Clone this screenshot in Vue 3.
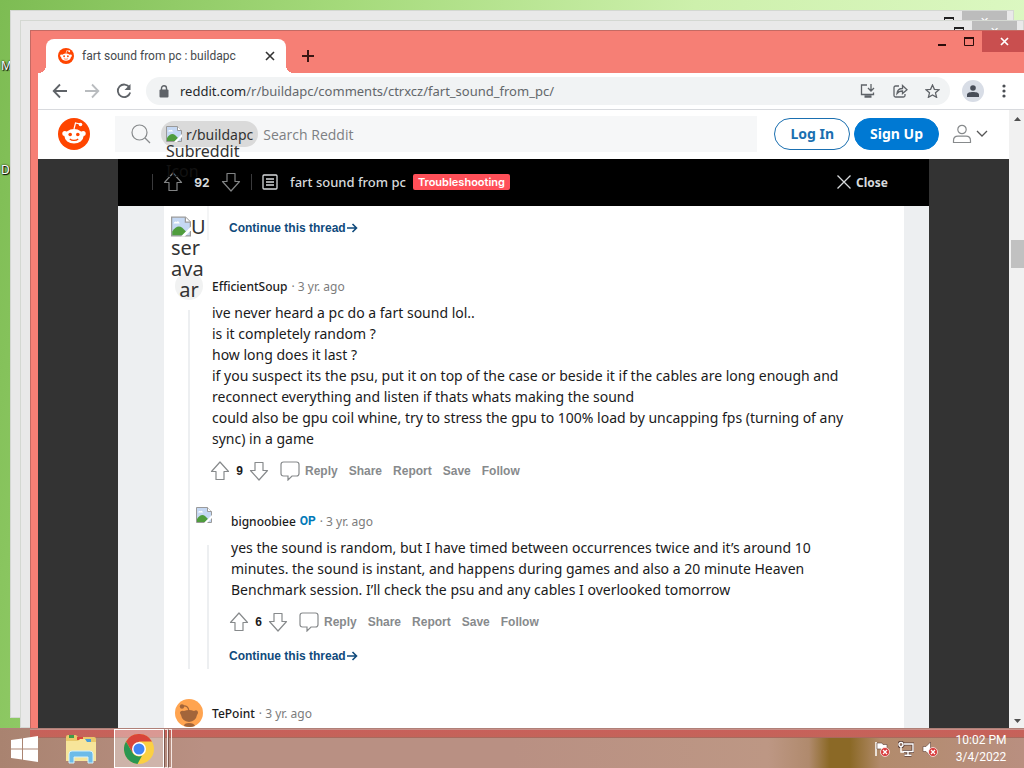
<template>
  <div class="desktop">
    <span class="desktop-label label-first">My</span>
    <span class="desktop-label label-second">De</span>

    <div class="back-window back-one">
      <span class="back-max"></span>
      <span class="back-close">✕</span>
    </div>
    <div class="back-window back-two">
      <span class="back-max"></span>
      <span class="back-close">✕</span>
    </div>

    <section class="browser">
      <div class="titlebar">
        <div class="tab">
          <svg class="tab-logo" viewBox="0 0 32 32">
            <use href="#snoo" />
          </svg>
          <span class="tab-title">fart sound from pc : buildapc</span>
          <button class="icon-button" aria-label="Close tab">
            <svg width="10" height="10" viewBox="0 0 10 10">
              <path d="M1 1l8 8M9 1l-8 8" stroke="#333" stroke-width="1.6" />
            </svg>
          </button>
        </div>
        <button class="icon-button new-tab" aria-label="New tab">
          <svg width="14" height="14" viewBox="0 0 14 14">
            <path d="M7 1v12M1 7h12" stroke="#3a1613" stroke-width="2" />
          </svg>
        </button>
        <div class="window-controls">
          <button aria-label="Minimize">
            <svg width="10" height="10" viewBox="0 0 10 10">
              <path d="M1 8h8" stroke="#2b0d0b" stroke-width="2" />
            </svg>
          </button>
          <button aria-label="Maximize">
            <svg width="10" height="9" viewBox="0 0 10 9">
              <path d="M.5 1v7.5h9V1" fill="none" stroke="#2b0d0b" />
              <path d="M0 1h10" stroke="#2b0d0b" stroke-width="2" />
            </svg>
          </button>
          <button class="window-close" aria-label="Close">
            <svg width="9" height="9" viewBox="0 0 9 9">
              <path d="M1 1l7 7M8 1l-7 7" stroke="#fff" stroke-width="1.7" />
            </svg>
          </button>
        </div>
      </div>

      <div class="toolbar">
        <button class="icon-button" aria-label="Back">
          <svg width="16" height="16" viewBox="0 0 16 16" class="line dark">
            <path d="M15 8H2M8 1.500L1.700 8L8 14.500" />
          </svg>
        </button>
        <button class="icon-button" aria-label="Forward">
          <svg width="16" height="16" viewBox="0 0 16 16" class="line pale">
            <path d="M1 8h13M8 1.500L14.300 8L8 14.500" />
          </svg>
        </button>
        <button class="icon-button" aria-label="Reload">
          <svg width="16" height="16" viewBox="0 0 16 16" class="line dark">
            <path d="M13.500 4.500A6.300 6.300 0 1 0 14.200 9.500" />
            <path d="M14.500 1v6h-6z" fill="#5f6368" stroke="none" />
          </svg>
        </button>
        <div class="address">
          <svg width="10" height="13" viewBox="0 0 10 13">
            <rect x="0.500" y="4.500" width="9" height="8" rx="1" fill="#5f6368" />
            <path d="M2.500 5V3.300a2.500 2.500 0 0 1 5 0V5" fill="none" stroke="#5f6368" stroke-width="1.400" />
          </svg>
          <a class="url" href="#"><b>reddit.com</b>/r/buildapc/comments/ctrxcz/fart_sound_from_pc/</a>
          <button class="icon-button" aria-label="Install">
            <svg width="16" height="14" viewBox="0 0 16 14" class="line dark thin">
              <path d="M7 1H1.500v9.500h12V8.500M11 0v6.500M8 4l3 3l3-3" />
              <path d="M4.500 12.500h7" stroke-width="2.500" />
            </svg>
          </button>
          <button class="icon-button" aria-label="Share">
            <svg width="15" height="14" viewBox="0 0 15 14" class="line dark thin">
              <path d="M6 2H2.500a1.500 1.500 0 0 0-1.500 1.500v8A1.500 1.500 0 0 0 2.500 13h8a1.500 1.500 0 0 0 1.500-1.500V10" />
              <path d="M4 9.500c.3-3.500 2.500-5 5.500-5V1.500L14 5.700L9.500 9.500V7C7 7 5.300 7.700 4 9.500z" />
            </svg>
          </button>
          <button class="icon-button" aria-label="Bookmark">
            <svg width="15" height="14" viewBox="0 0 15 14" class="line dark thin">
              <path d="M7.500 1l1.900 4.300l4.600.4l-3.500 3.100l1.100 4.500l-4.100-2.400l-4.100 2.400l1.100-4.500L1 5.700l4.600-.4z" />
            </svg>
          </button>
        </div>
        <button class="profile" aria-label="Profile">
          <svg width="12" height="12" viewBox="0 0 12 12" fill="#474d58">
            <circle cx="6" cy="3" r="2.800" />
            <path d="M0 12V9.500C0 7.800 3 7 6 7s6 .8 6 2.500V12z" />
          </svg>
        </button>
        <button class="icon-button menu" aria-label="Menu">
          <svg width="4" height="14" viewBox="0 0 4 14" fill="#4b4f54">
            <circle cx="2" cy="2" r="1.600" />
            <circle cx="2" cy="7" r="1.600" />
            <circle cx="2" cy="12" r="1.600" />
          </svg>
        </button>
      </div>

      <div class="viewport">
        <main class="page">
          <header class="site-header">
            <svg class="site-logo" viewBox="0 0 32 32">
              <g id="snoo">
                <circle cx="16" cy="16" r="16" fill="#ff4500" />
                <path d="M16 11l1.500-6l4.500 1" fill="none" stroke="#fff" stroke-width="1.200" />
                <circle cx="22.500" cy="6.500" r="1.800" fill="#fff" />
                <circle cx="6.800" cy="15.500" r="2.500" fill="#fff" />
                <circle cx="25.200" cy="15.500" r="2.500" fill="#fff" />
                <ellipse cx="16" cy="18.300" rx="9.500" ry="7.200" fill="#fff" />
                <circle cx="12.200" cy="16.500" r="1.800" fill="#ff4500" />
                <circle cx="19.800" cy="16.500" r="1.800" fill="#ff4500" />
                <path d="M11.800 21c2 1.900 6.400 1.900 8.400 0" fill="none" stroke="#ff4500" stroke-width="1.200" />
              </g>
            </svg>
            <div class="search">
              <svg width="20" height="20" viewBox="0 0 20 20" fill="none" stroke="#878a8c" stroke-width="1.200">
                <circle cx="8.500" cy="8.500" r="7.500" />
                <path d="M14 14l5 5" />
              </svg>
              <span class="chip">
                <svg width="16" height="16" viewBox="0 0 16 16"><use href="#broken" /></svg>
                r/buildapc
                <span class="chip-alt">Subreddit<br /><i>Icon</i></span>
              </span>
              <input type="search" placeholder="Search Reddit" aria-label="Search Reddit" />
            </div>
            <button class="pill outline">Log In</button>
            <button class="pill solid">Sign Up</button>
            <button class="icon-button user-menu" aria-label="User menu">
              <svg width="20" height="20" viewBox="0 0 20 20" fill="none" stroke="#878a8c" stroke-width="1.200">
                <circle cx="10" cy="5.500" r="4.200" />
                <path d="M1.500 18.500v-1.800c0-3 2-4.500 4.500-4.500h8c2.500 0 4.500 1.500 4.500 4.500v1.800z" />
              </svg>
              <svg width="12" height="8" viewBox="0 0 12 8" fill="none" stroke="#555" stroke-width="1.300">
                <path d="M1 1l5 5l5-5" />
              </svg>
            </button>
          </header>

          <article class="post">
            <div class="post-bar">
              <div class="post-votes">
                <button class="icon-button" aria-label="Upvote">
                  <svg class="arrow" viewBox="0 0 20 20"><use href="#arrow" /></svg>
                </button>
                <span>92</span>
                <button class="icon-button" aria-label="Downvote">
                  <svg class="arrow down" viewBox="0 0 20 20"><use href="#arrow" /></svg>
                </button>
              </div>
              <svg width="16" height="16" viewBox="0 0 16 16" fill="none" stroke="#d7dadc" stroke-width="1.300">
                <rect x="1" y="1" width="14" height="14" rx="1" />
                <path d="M4 5h8M4 8h8M4 11h8" />
              </svg>
              <h1>fart sound from pc</h1>
              <span class="flair">Troubleshooting</span>
              <button class="close-post">
                <svg width="14" height="14" viewBox="0 0 14 14" stroke="#d7dadc" stroke-width="1.300">
                  <path d="M.5.5l13 13M13.500.5l-13 13" />
                </svg>
                Close
              </button>
            </div>

            <div class="sheet">
              <div class="comments">
                <div class="thread-tail">
                  <ThreadLink />
                </div>
                <Comment v-for="comment in comments" :key="comment.author" :comment="comment" />
              </div>
            </div>
          </article>
        </main>
        <div class="scrollbar">
          <svg width="7" height="4" viewBox="0 0 7 4"><path d="M0 4l3.500-4L7 4z" fill="#505050" /></svg>
          <span class="thumb"></span>
          <svg width="7" height="4" viewBox="0 0 7 4"><path d="M0 0l3.500 4L7 0z" fill="#505050" /></svg>
        </div>
      </div>
    </section>

    <footer class="taskbar">
      <button class="task start" aria-label="Start">
        <svg width="27" height="26" viewBox="0 0 27 26" fill="#fff">
          <path d="M0 4L11 2.500V12.400H0zM12 2.300L27 0v12.400H12zM0 13.500h11v10L0 22zM12 13.500h15V26l-15-2.300z" />
        </svg>
      </button>
      <button class="task files" aria-label="File Explorer">
        <svg width="32" height="30" viewBox="0 0 32 30">
          <path d="M1 3q0-2 2-2h8l2 2h16q2 0 2 2v22H1z" fill="#e9c96b" />
          <path d="M4 1h5v3H4z" fill="#3f9a4a" />
          <path d="M12 3h6v3h-6z" fill="#d9483b" />
          <path d="M20 5h6v3h-6z" fill="#4b9fd8" />
          <path d="M1 7h12l2-2h5l2 3h9v19H1z" fill="#f7e59a" />
          <path d="M4 29v-9q0-3 3-3h18q3 0 3 3v9h-5v-6H9v6z" fill="#6dbbe8" stroke="#d5f1fb" />
        </svg>
      </button>
      <button class="task chrome" aria-label="Chrome">
        <svg width="30" height="30" viewBox="0 0 30 30">
          <circle cx="15" cy="15" r="15" fill="#fbd043" />
          <path d="M2 7.500A15 15 0 0 1 28 7.500H15L8.500 18.700z" fill="#d9453a" />
          <path d="M2 7.500L8.500 18.700A7.500 7.500 0 0 0 18 21.800L13.500 30A15 15 0 0 1 2 7.500z" fill="#2a9652" />
          <circle cx="15" cy="15" r="7" fill="#fff" />
          <circle cx="15" cy="15" r="5.500" fill="#4285f4" />
        </svg>
      </button>
      <span class="stack"></span>
      <span class="stack"></span>
      <div class="tray">
        <svg width="16" height="16" viewBox="0 0 16 16">
          <path d="M2 1v14" stroke="#fff" stroke-width="1.500" />
          <path d="M3 2h5l1 1.500h4V9H8L7 8H3z" fill="#fff" stroke="#5d4038" stroke-width=".6" />
          <use href="#alert" />
        </svg>
        <svg width="16" height="16" viewBox="0 0 16 16" fill="none">
          <g stroke="#5d4038" stroke-width="3">
            <path d="M6 3h9v7.500H5M10 11v3M6.500 14.300h7" />
            <circle cx="3" cy="3.500" r="2.200" />
          </g>
          <g stroke="#fff" stroke-width="1.400">
            <path d="M6 3h9v7.500H5M10 11v3M6.500 14.300h7" />
            <circle cx="3" cy="3.500" r="2" />
            <path d="M3 6v5h3" />
          </g>
        </svg>
        <svg width="16" height="16" viewBox="0 0 16 16">
          <path d="M1 5.500h3L8.500 1v14L4 10.500H1z" fill="#fff" stroke="#5d4038" stroke-width=".6" />
          <g id="alert">
            <circle cx="11" cy="11" r="4.500" fill="#d83a3a" stroke="#fff" stroke-width=".7" />
            <path d="M9 9l4 4M13 9l-4 4" stroke="#fff" stroke-width="1.300" />
          </g>
        </svg>
      </div>
      <div class="clock">
        <span>10:02 PM</span>
        <span>3/4/2022</span>
      </div>
    </footer>

    <!-- shared symbols -->
    <svg class="symbols" width="0" height="0">
      <g id="arrow">
        <path d="M10 1l8.500 9.500h-4.500v8h-8v-8H1.500z" fill="none" stroke="currentColor" stroke-width="1.200" stroke-linejoin="round" />
      </g>
      <g id="broken">
        <path d="M.5.5h11l4 4v11H.5z" fill="#c5d8f3" stroke="#9a9a9a" />
        <path d="M2 5.500q1-2 2.500-1.200Q6 3 7 5.500z" fill="#fff" />
        <path d="M1 15v-3q4-6 8-3l3 3l-3 3z" fill="#4f9d3d" />
        <path d="M8 16l8-8v3l-5 5z" fill="#fff" />
        <path d="M11.500.5v4h4" fill="#fff" stroke="#9a9a9a" />
      </g>
    </svg>
  </div>
</template>

<script setup>
import { h } from "vue";

const actions = ["Share", "Report", "Save", "Follow"];

const comments = [
  {
    author: "EfficientSoup",
    avatar: "alt",
    votes: 9,
    lines: [
      "ive never heard a pc do a fart sound lol..",
      "is it completely random ?",
      "how long does it last ?",
      "if you suspect its the psu, put it on top of the case or beside it if the cables are long enough and reconnect everything and listen if thats whats making the sound",
      "could also be gpu coil whine, try to stress the gpu to 100% load by uncapping fps (turning of any sync) in a game",
    ],
    replies: [
      {
        author: "bignoobiee",
        op: true,
        avatar: "broken",
        votes: 6,
        more: true,
        lines: [
          "yes the sound is random, but I have timed between occurrences twice and it’s around 10 minutes. the sound is instant, and happens during games and also a 20 minute Heaven Benchmark session. I’ll check the psu and any cables I overlooked tomorrow",
        ],
      },
    ],
  },
  { author: "TePoint", avatar: "snoo" },
];

// small render helpers
const useIcon = (id, className, size = 20) =>
  h("svg", { class: className, viewBox: `0 0 ${size} ${size}` }, [
    h("use", { href: `#${id}` }),
  ]);

const ThreadLink = () =>
  h("a", { class: "thread-link", href: "#" }, [
    "Continue this thread",
    h("svg", { width: 11, height: 10, viewBox: "0 0 11 10" }, [
      h("path", {
        d: "M0 5h9.500M5.500 1l4 4l-4 4",
        fill: "none",
        stroke: "currentColor",
        "stroke-width": 1.6,
      }),
    ]),
  ]);

const Avatar = ({ kind }) => {
  if (kind === "alt") {
    return h("div", { class: "avatar avatar-alt" }, [
      h("div", { class: "alt-text" }, [
        h("span", [useIcon("broken", "alt-icon", 16), "U"]),
        h("span", "ser"),
        h("span", "ava"),
        h("span", { class: "alt-last" }, "ar"),
      ]),
    ]);
  }
  if (kind === "broken") {
    return h("div", { class: "avatar" }, [useIcon("broken", "broken", 16)]);
  }
  return h("div", { class: "avatar avatar-snoo" }, [
    h("svg", { viewBox: "0 0 28 28" }, [
      h("circle", { cx: 14, cy: 14, r: 14, fill: "#ffa450" }),
      h("path", {
        d: "M14 12q-1-6-6-5",
        fill: "none",
        stroke: "#a3653a",
        "stroke-width": 1.2,
      }),
      h("circle", { cx: 7, cy: 7.5, r: 2.2, fill: "#a3653a" }),
      h("path", {
        d: "M5 13q2-2 4-1q5-2 10 0q3-2 4 1q0 2-1 3q-1 6-8 7q-7-1-8-7q-1-1-1-3z",
        fill: "#a3653a",
      }),
      h("path", { d: "M9 27q0-3 5-3t6 3q-5 2-11 0z", fill: "#a3653a" }),
    ]),
  ]);
};
Avatar.props = ["kind"];

const Comment = ({ comment }) =>
  h("div", { class: "comment" }, [
    h("div", { class: "comment-head" }, [
      h(Avatar, { kind: comment.avatar }),
      h("a", { class: "author", href: "#" }, comment.author),
      comment.op ? h("span", { class: "op" }, "OP") : null,
      h("span", { class: "age" }, "· 3 yr. ago"),
    ]),
    comment.lines
      ? h("div", { class: "comment-thread" }, [
          h("div", { class: "comment-main" }, [
            comment.lines.map((line) => h("p", line)),
            h("div", { class: "actions" }, [
              h("button", { "aria-label": "Upvote" }, [useIcon("arrow", "arrow")]),
              h("span", { class: "votes" }, comment.votes),
              h("button", { "aria-label": "Downvote" }, [
                useIcon("arrow", "arrow down"),
              ]),
              h("button", { class: "reply" }, [
                h("svg", { viewBox: "0 0 20 20" }, [
                  h("path", {
                    d: "M3.500 1h13Q19 1 19 3.500v9q0 2.500-2.500 2.500H12l-4 4v-4H3.500Q1 15 1 12.500v-9Q1 1 3.500 1z",
                    fill: "none",
                    stroke: "currentColor",
                    "stroke-width": 1.2,
                  }),
                ]),
                "Reply",
              ]),
              actions.map((action) => h("button", action)),
            ]),
            comment.more ? h(ThreadLink) : null,
          ]),
          (comment.replies || []).map((reply) => h(Comment, { comment: reply })),
        ])
      : null,
  ]);
Comment.props = ["comment"];
</script>

<style>
body {
  margin: 0;
  overflow: hidden;
}

/* comments come from render functions */
.comment-head {
  display: flex;
  align-items: center;
  height: 28px;
  font-size: 12px;
}

.comment + .comment {
  margin-top: 30px;
}

.comment-thread > .comment {
  margin-top: 22px;
  margin-left: 19px;
}

.avatar {
  width: 28px;
  height: 28px;
  margin-right: 9px;
}

.avatar svg {
  display: block;
}

.avatar .broken {
  width: 16px;
  height: 16px;
  margin-left: 2px;
}

.avatar-alt {
  position: relative;
  border-radius: 14px;
  background: #f1f2f2;
}

.alt-text {
  position: absolute;
  left: -4px;
  bottom: 0;
  width: 36px;
  display: flex;
  flex-direction: column;
  color: #333;
  font-size: 20px;
  line-height: 21px;
}

.alt-text span {
  display: flex;
}

.alt-text .alt-last {
  justify-content: center;
}

.alt-text .alt-icon {
  width: 20px;
  height: 21px;
}

.author {
  color: #1c1c1c;
  font-weight: 500;
  text-decoration: none;
}

.op {
  margin-left: 4px;
  color: #0079b8;
  font-family: "Roboto", sans-serif;
  font-size: 12px;
  font-weight: 700;
}

.age {
  margin-left: 4px;
  color: #7c7c7c;
}

.comment-thread {
  position: relative;
  margin-top: 2px;
}

.comment-thread::before {
  content: "";
  position: absolute;
  top: 8px;
  bottom: 0;
  left: 13px;
  width: 2px;
  background: #edeff1;
}

.comment-main {
  padding-left: 37px;
}

.comment-main p {
  margin: 0;
  max-width: 640px;
  color: #1a1a1b;
  font-size: 14px;
  line-height: 21px;
}

.actions {
  display: flex;
  align-items: center;
  height: 28px;
  margin-top: 8px;
  color: #878a8c;
}

.actions button {
  display: flex;
  align-items: center;
  margin-right: 11px;
  padding: 0;
  border: 0;
  background: none;
  color: inherit;
  font-family: "Liberation Sans", sans-serif;
  font-size: 12px;
  font-weight: 700;
}

.actions button:nth-child(1) {
  margin-right: 0;
  margin-left: -2px;
}

.actions .votes {
  width: 19px;
  color: #1a1a1b;
  font-family: "Liberation Sans", sans-serif;
  font-size: 12px;
  font-weight: 700;
  text-align: center;
}

.actions svg,
.arrow {
  width: 20px;
  height: 20px;
}

.actions .reply svg {
  margin-right: 5px;
}

.arrow.down {
  transform: rotate(180deg);
}

.thread-link {
  display: flex;
  align-items: center;
  gap: 1px;
  height: 26px;
  margin: 7px 0 0 -2px;
  color: #0f4a7c;
  font-family: "Liberation Sans", sans-serif;
  font-size: 12px;
  font-weight: 700;
  text-decoration: none;
}
</style>

<style scoped>
.desktop {
  position: relative;
  height: 100vh;
  overflow: hidden;
  background: linear-gradient(100deg, #7dbc53 0%, #a5da7b 30%, #cdf0ac 60%, #dcf8c2 90%, #b9ec8c 100%);
  font-family: "Noto Sans", sans-serif;
}

button {
  font-family: inherit;
  cursor: pointer;
}

.symbols {
  position: absolute;
}

.desktop-label {
  position: absolute;
  left: 1px;
  color: #fff;
  font-size: 12px;
  line-height: 16px;
  text-shadow: 0 0 2px #000, 1px 1px 1px #000;
}

.label-first {
  top: 58px;
}

.label-second {
  top: 162px;
}

.back-window {
  position: absolute;
  display: flex;
  justify-content: flex-end;
  box-sizing: border-box;
  border: 1px solid #d4d8d2;
  background: #e9e9e9;
}

.back-one {
  top: 10px;
  right: 10px;
  bottom: 50px;
  left: 10px;
}

.back-two {
  top: 20px;
  right: 0;
  bottom: 40px;
  left: 20px;
}

.back-max {
  width: 8px;
  height: 6px;
  margin: 6px 8px 0 0;
  border: 1px solid #222;
  border-top-width: 2px;
}

.back-close {
  width: 45px;
  height: 20px;
  margin-right: 6px;
  background: #bcbcbc;
  color: #fff;
  font-size: 11px;
  line-height: 20px;
  text-align: center;
}

.browser {
  position: absolute;
  top: 30px;
  right: -10px;
  bottom: 30px;
  left: 30px;
  display: flex;
  flex-direction: column;
  box-sizing: border-box;
  padding: 0 7px 8px;
  border: 1px solid #c46a63;
  border-bottom: 0;
  background: #f67f75;
}

.icon-button {
  display: flex;
  align-items: center;
  padding: 0;
  border: 0;
  background: none;
}

.titlebar {
  display: flex;
  height: 42px;
  padding-left: 8px;
}

.tab {
  position: relative;
  display: flex;
  align-items: center;
  box-sizing: border-box;
  width: 240px;
  height: 34px;
  margin-top: 8px;
  padding: 0 11px 0 12px;
  border-radius: 8px 8px 0 0;
  background: #fff;
}

.tab::before,
.tab::after {
  content: "";
  position: absolute;
  bottom: 0;
  width: 8px;
  height: 8px;
}

.tab::before {
  left: -8px;
  background: radial-gradient(circle at 0 0, transparent 8px, #fff 8px);
}

.tab::after {
  right: -8px;
  background: radial-gradient(circle at 100% 0, transparent 8px, #fff 8px);
}

.tab-logo {
  width: 16px;
  height: 16px;
  margin-right: 8px;
}

.tab-title {
  flex: 1;
  color: #45494d;
  font-family: "Roboto", sans-serif;
  font-size: 12px;
}

.new-tab {
  margin: 8px 0 0 15px;
}

.window-controls {
  display: flex;
  align-items: flex-start;
  margin-right: -1px;
  margin-left: auto;
}

.window-controls button {
  display: flex;
  justify-content: center;
  align-items: center;
  width: 27px;
  height: 21px;
  padding: 0;
  border: 0;
  background: none;
}

.window-controls .window-close {
  width: 45px;
  background: #c94f4f;
}

.toolbar {
  display: flex;
  align-items: center;
  gap: 16px;
  box-sizing: border-box;
  height: 37px;
  padding: 0 17px 0 14px;
  border-bottom: 1px solid #d8dade;
  background: #fff;
}

.line {
  fill: none;
  stroke-width: 1.8;
}

.line.thin {
  stroke-width: 1.3;
}

.line.dark {
  stroke: #5f6368;
}

.line.pale {
  stroke: #b9bcbf;
}

.address {
  flex: 1;
  display: flex;
  align-items: center;
  gap: 17px;
  height: 28px;
  margin-left: -2px;
  padding: 0 10px 0 13px;
  border-radius: 14px;
  background: #f1f3f4;
}

.url {
  flex: 1;
  margin-left: -6px;
  color: #63676b;
  font-size: 13px;
  text-decoration: none;
}

.url b {
  color: #27292c;
  font-weight: 400;
}

.profile {
  display: flex;
  justify-content: center;
  align-items: center;
  width: 22px;
  height: 22px;
  margin-left: -4px;
  padding: 0;
  border: 0;
  border-radius: 11px;
  background: #d8dde6;
}

.menu {
  margin: 0 3px 0 2px;
}

.viewport {
  flex: 1;
  display: flex;
  min-height: 0;
}

.page {
  flex: 1;
  min-width: 0;
  overflow: hidden;
  background: #333;
}

.site-header {
  display: flex;
  align-items: center;
  box-sizing: border-box;
  height: 49px;
  padding: 0 21px 1px 20px;
  background: #fff;
}

.site-logo {
  width: 32px;
  height: 32px;
}

.search {
  flex: 1;
  display: flex;
  align-items: center;
  height: 36px;
  margin: 0 17px 0 25px;
  padding-left: 16px;
  background: #f6f7f8;
}

.chip {
  position: relative;
  display: flex;
  align-items: center;
  gap: 4px;
  height: 26px;
  margin-left: 10px;
  padding: 0 5px;
  border-radius: 13px;
  background: #dadada;
  color: #333;
  font-size: 14px;
}

.chip-alt {
  position: absolute;
  top: 20px;
  left: 5px;
  font-size: 16px;
  line-height: 20px;
}

.chip-alt i {
  color: #121212;
  font-style: normal;
}

.search input {
  flex: 1;
  min-width: 0;
  padding: 0 0 0 5px;
  border: 0;
  outline: 0;
  background: none;
  font-family: "Open Sans", sans-serif;
  font-size: 14px;
}

.search input::placeholder {
  color: #7d8083;
}

.pill {
  height: 32px;
  margin-right: 4px;
  padding: 0 15px 1px;
  border: 1px solid #1a6fb0;
  border-radius: 16px;
  font-size: 14px;
  font-weight: 700;
}

.pill.outline {
  background: #fff;
  color: #1a6fb0;
}

.pill.solid {
  margin-right: 13px;
  border-color: #0079d3;
  background: #0079d3;
  color: #fff;
}

.user-menu {
  gap: 4px;
}

.post {
  margin: 0 80px;
  background: #edeff1;
}

.post-bar {
  display: flex;
  align-items: center;
  box-sizing: border-box;
  height: 47px;
  padding: 0 41px 1px 34px;
  background: #000;
  color: #d7dadc;
}

.post-votes {
  display: flex;
  align-items: center;
  height: 16px;
  margin-right: 10px;
  padding: 0 10px;
  border-right: 1px solid #3a3a3c;
  border-left: 1px solid #3a3a3c;
  font-family: "Inter", sans-serif;
  font-size: 12px;
  font-weight: 700;
}

.post-votes span {
  width: 38px;
  text-align: center;
}

.post-votes button {
  color: #818384;
}

.post-bar h1 {
  margin: 0 7px 0 12px;
  font-size: 13px;
  font-weight: 500;
}

.flair {
  padding: 0 5px;
  border-radius: 2px;
  background: #ff4f58;
  color: #fff;
  font-family: "Inter", sans-serif;
  font-size: 11px;
  font-weight: 600;
  line-height: 16px;
}

.close-post {
  display: flex;
  align-items: center;
  gap: 5px;
  margin-left: auto;
  padding: 0;
  border: 0;
  background: none;
  color: #d7dadc;
  font-size: 12px;
  font-weight: 700;
}

.sheet {
  padding: 0 25px 0 46px;
}

.comments {
  min-height: 560px;
  padding: 0 10px 0 11px;
  background: #fff;
}

.thread-tail {
  position: relative;
  height: 66px;
  padding-left: 56px;
}

.thread-tail::before {
  content: "";
  position: absolute;
  top: 0;
  left: 32px;
  width: 2px;
  height: 34px;
  background: #f4f5f6;
}

.thread-tail :deep(.thread-link) {
  height: 44px;
  margin-top: 0;
}

.scrollbar {
  display: flex;
  flex-direction: column;
  align-items: center;
  box-sizing: border-box;
  width: 17px;
  padding: 7px 0;
  background: #f1f1f1;
}

.scrollbar .thumb {
  width: 13px;
  height: 28px;
  margin: 119px 0 auto;
  background: #c1c1c1;
}

.taskbar {
  position: absolute;
  right: 0;
  bottom: 0;
  left: 0;
  display: flex;
  box-sizing: border-box;
  height: 40px;
  border-top: 1px solid #b08078;
  background:
    linear-gradient(180deg, #c98f88 1px, #c8605a 1px, #c46459 8px, #a8695d 8px) 30px 0 / 100% 9px no-repeat,
    linear-gradient(90deg, #a98370 0%, #b99083 20%, #b99083 50%, #bd9784 75%, #b08a6d 79%, #8b6926 81%, #8b6926 83%, #b28b6c 86%, #b98f80 100%);
}

.task {
  display: flex;
  justify-content: center;
  align-items: center;
  padding: 0;
  border: 0;
  background: none;
}

.start {
  width: 48px;
}

.files {
  width: 66px;
}

.chrome {
  box-sizing: border-box;
  width: 50px;
  border: 1px solid #fff;
  background: rgba(255, 255, 255, 0.35);
}

.stack {
  box-sizing: border-box;
  width: 4px;
  border: 1px solid #f5e8e4;
  border-left: 1px solid #7d574d;
}

.tray {
  display: flex;
  align-items: center;
  gap: 8px;
  margin-left: auto;
}

.clock {
  display: flex;
  flex-direction: column;
  justify-content: center;
  width: 86px;
  color: #fff;
  font-family: "Roboto", sans-serif;
  font-size: 12px;
  line-height: 17px;
  text-align: center;
}
</style>
